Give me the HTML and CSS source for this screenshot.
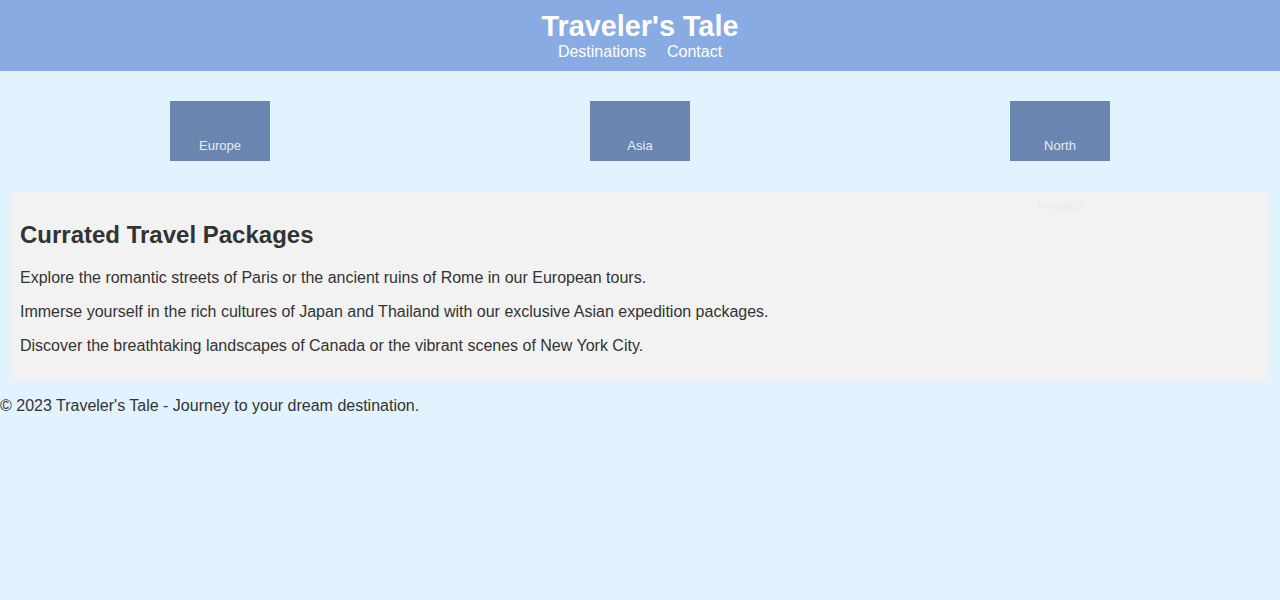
FILE: index.html
```html
<!DOCTYPE html>
<html lang="en">
<head>
<meta charset="utf-8">
<title>Traveler's Tale</title>
<link rel="stylesheet" href="styles.css">
</head>
<body>
<header class="site-header">
  <h1 class="site-title">Traveler's Tale</h1>
  <nav class="site-nav">
    <a href="#destinations">Destinations</a>
    <a href="#contact">Contact</a>
  </nav>
</header>
<div class="regions">
  <div class="region-cell"><div class="region">Europe</div></div>
  <div class="region-cell"><div class="region">Asia</div></div>
  <div class="region-cell"><div class="region">North America</div></div>
</div>
<section class="packages">
  <h2>Currated Travel Packages</h2>
  <p>Explore the romantic streets of Paris or the ancient ruins of Rome in our European tours.</p>
  <p>Immerse yourself in the rich cultures of Japan and Thailand with our exclusive Asian expedition packages.</p>
  <p>Discover the breathtaking landscapes of Canada or the vibrant scenes of New York City.</p>
</section>
<footer class="site-footer">
  <p>&copy; 2023 Traveler's Tale - Journey to your dream destination.</p>
</footer>
</body>
</html>
```

FILE: styles.css
```css
html, body {
  margin: 0;
  padding: 0;
}
body {
  background: #e0f3ff;
  color: #333333;
  font-family: "Liberation Sans", Arial, sans-serif;
  font-size: 16px;
}
.site-header {
  background: #88abe4;
  color: #ffffff;
  text-align: center;
  padding: 10px 0;
}
.site-title {
  margin: 0;
  font-size: 28.8px;
  font-weight: bold;
  line-height: 32px;
}
.site-nav {
  display: flex;
  justify-content: center;
  gap: 21px;
  line-height: 19px;
}
.site-nav a {
  color: #ffffff;
  text-decoration: none;
}
.regions {
  display: grid;
  grid-template-columns: repeat(3, 1fr);
  padding: 30px 10px;
}
.region-cell {
  display: flex;
  justify-content: center;
}
.region {
  width: 100px;
  height: 60px;
  box-sizing: border-box;
  padding: 15px 10px 0;
  background: #4e6a9e;
  opacity: 0.8;
  color: #e8eaf0;
  font-size: 13px;
  line-height: 60px;
  text-align: center;
}
.packages {
  background: #f2f2f2;
  margin: 0 10px;
  padding: 10px;
  border-radius: 5px;
}
.packages h2 {
  font-size: 24px;
  margin: 20px 0;
  line-height: 28px;
}
.packages p {
  margin: 16px 0;
  line-height: 18px;
}
.site-footer p {
  margin: 16px 0;
  line-height: 18px;
}
```
